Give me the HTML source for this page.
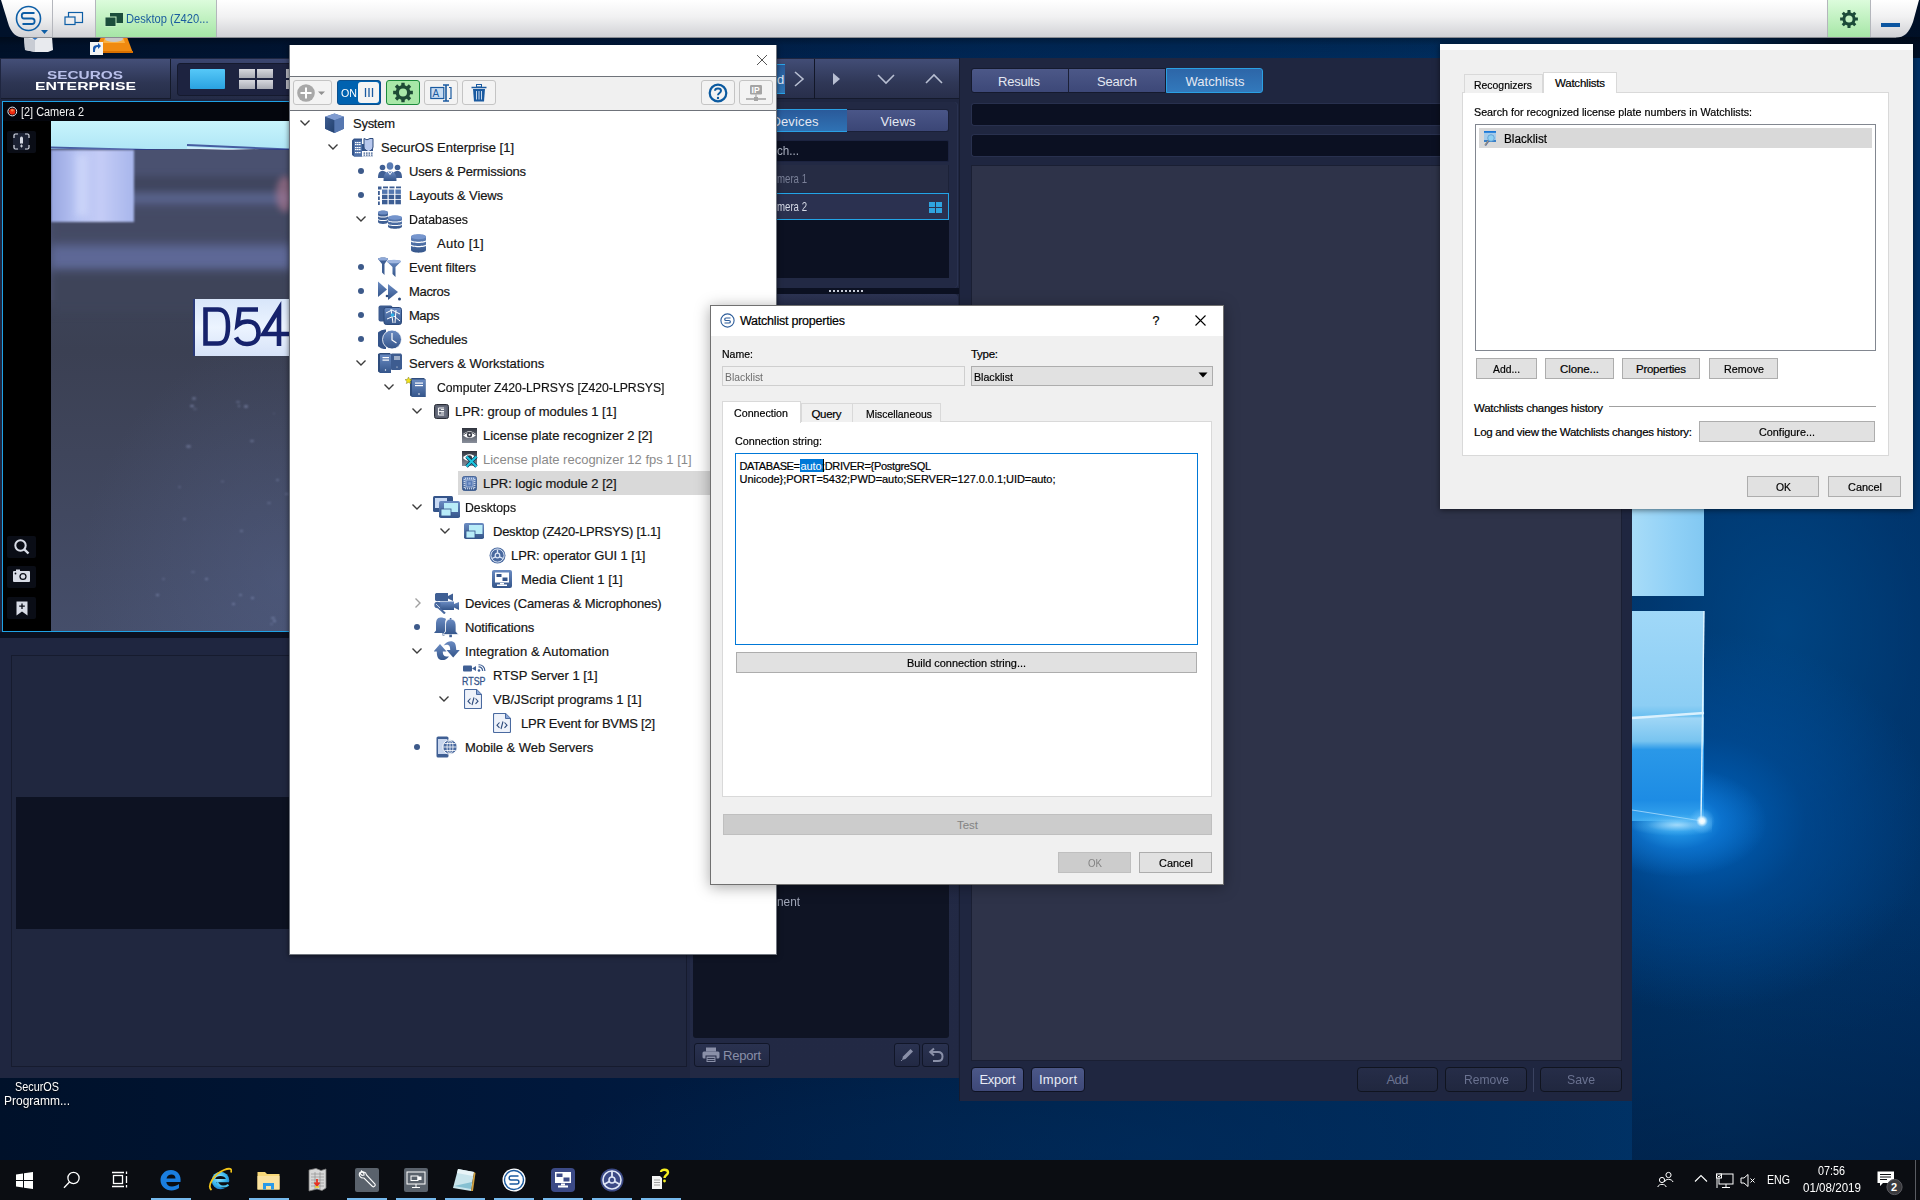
<!DOCTYPE html><html><head><meta charset="utf-8"><style>
*{margin:0;padding:0;box-sizing:border-box}
html,body{width:1920px;height:1200px;overflow:hidden;background:#002450;font-family:"Liberation Sans",sans-serif;position:relative}
.a{position:absolute}
.t{position:absolute;white-space:nowrap;line-height:1}
</style></head><body>
<div class="a" style="left:0px;top:0px;width:1920px;height:1200px;background:linear-gradient(90deg,#00112a 0%,#00183c 30%,#00234c 55%,#002c5c 75%,#00356a 90%,#003064 100%)"></div>
<div class="a" style="left:0px;top:0px;width:1920px;height:1200px;background:radial-gradient(ellipse 560px 60px at 1000px 45px,rgba(0,50,110,.35),rgba(0,40,90,0) 100%)"></div>
<div class="a" style="left:0px;top:1060px;width:1920px;height:100px;background:radial-gradient(ellipse 600px 110px at 1150px 90px,rgba(0,45,95,.55),rgba(0,40,90,0) 100%)"></div>
<div class="a" style="left:1632px;top:300px;width:288px;height:860px;background:radial-gradient(ellipse 300px 420px at 150px 330px,rgba(0,72,136,.8) 0%,rgba(0,60,120,.5) 45%,rgba(0,40,90,0) 100%)"></div>
<div class="a" style="left:1632px;top:900px;width:288px;height:260px;background:linear-gradient(rgba(0,20,50,0),rgba(0,20,50,.45))"></div>
<div class="a" style="left:1700px;top:0px;width:220px;height:58px;background:linear-gradient(90deg,rgba(0,12,30,0),rgba(0,10,28,.85) 60%)"></div>
<div class="a" style="left:0px;top:37px;width:1920px;height:21px;background:linear-gradient(rgba(0,0,0,.35),rgba(0,0,0,.08) 40%,rgba(0,0,0,0))"></div>
<div class="a" style="left:1632px;top:560px;width:288px;height:500px;background:radial-gradient(ellipse 230px 190px at 70px 262px,rgba(0,110,210,.8),rgba(0,85,170,.45) 45%,rgba(0,60,130,0) 100%)"></div>
<div class="a" style="left:1632px;top:760px;width:200px;height:140px;background:radial-gradient(ellipse 90px 55px at 45px 62px,rgba(50,175,250,.95),rgba(20,130,225,.55) 50%,rgba(0,90,170,0) 100%)"></div>
<div class="a" style="left:1632px;top:509px;width:72px;height:87px;background:linear-gradient(90deg,#a8dcf8,#8fd0f6 60%,#82c8f2)"></div>
<div class="a" style="left:1632px;top:611px;width:72px;height:210px;background:linear-gradient(180deg,#a0d8f8 0%,#8ccef4 45%,#6cc0f0 50%,#9fd6f6 51%,#78c4f0 62%,#2a98e8 66%,#1d8ce4 90%,#3aa8f0 100%)"></div>
<svg class="a" style="left:1632px;top:600px" width="90" height="240"><path d="M0,118 L72,113" stroke="#e6f6ff" stroke-width="2.5" opacity=".9"/><path d="M72,11 L69,221" stroke="#dff4ff" stroke-width="1.4"/><path d="M0,210 L70,221" stroke="#bfe6ff" stroke-width="1" opacity=".7"/></svg>
<div class="a" style="left:1632px;top:808px;width:80px;height:30px;background:radial-gradient(ellipse 50px 11px at 45px 17px,rgba(210,240,255,.7),rgba(120,210,255,.25) 60%,rgba(0,0,0,0) 100%)"></div>
<div class="a" style="left:1689px;top:808px;width:26px;height:26px;background:radial-gradient(circle,#fff 0,#e6f8ff 14%,rgba(120,200,255,.45) 32%,rgba(120,200,255,0) 70%)"></div>
<div class="t" style="left:15.00px;top:1079.53px;font-size:13.5px;color:#fff;transform:scaleX(0.8033);transform-origin:0 0;text-shadow:0 1px 2px #000;">SecurOS</div>
<div class="t" style="left:4.00px;top:1094.03px;font-size:13.5px;color:#fff;transform:scaleX(0.8887);transform-origin:0 0;text-shadow:0 1px 2px #000;">Programm...</div>
<svg class="a" style="left:15px;top:37px" width="130" height="20" viewBox="0 0 130 20"><path d="M9,0 H37 L38,13 L33,15 L20,15 L10,13 Z" fill="#e8eaee"/><path d="M9,0 L10,13 L20,15 L20,3 Z" fill="#c8ccd4"/><path d="M16,0 L20,3 L24,0 Z" fill="#2a70c0"/><path d="M86,0 H112 L118,16 H79 Z" fill="#f08a10"/><path d="M90,0 H108 L110,6 H88 Z" fill="#fbb040"/><ellipse cx="99" cy="2" rx="9" ry="3" fill="#c8c8c8"/><path d="M79,14 H118 L118,16 H79 Z" fill="#d87000"/><rect x="75" y="5" width="13" height="13" fill="#f4f4f4"/><path d="M78,15 L78,11 C78,9 80,8 83,8 L83,6 L86,9 L83,12 L83,10 C81,10 80,11 80,15 Z" fill="#1a5ab0"/></svg>
<svg class="a" style="left:0;top:0" width="1920" height="40" viewBox="0 0 1920 40">
<defs><linearGradient id="tbg" x1="0" y1="0" x2="0" y2="1"><stop offset="0" stop-color="#ffffff"/><stop offset="0.45" stop-color="#f1f1f2"/><stop offset="1" stop-color="#d0d1d5"/></linearGradient>
<linearGradient id="gtab" x1="0" y1="0" x2="0" y2="1"><stop offset="0" stop-color="#dcfcdc"/><stop offset="1" stop-color="#a6e6a6"/></linearGradient></defs>
<path d="M1,0 L1919,0 L1913,22 C1909,33 1904,37.5 1896,37.5 L24,37.5 C16,37.5 12,33 9,26 Z" fill="url(#tbg)"/>
<path d="M24,37.5 L1896,37.5" stroke="#8a8c92" stroke-width="1"/>
<rect x="52" y="0" width="1" height="37" fill="#b4b6bc"/>
<rect x="95" y="0" width="1" height="37" fill="#b4b6bc"/>
<rect x="96" y="0" width="120" height="37" fill="url(#gtab)"/>
<rect x="216" y="0" width="1" height="37" fill="#b4b6bc"/>
<rect x="1827" y="0" width="1" height="37" fill="#b4b6bc"/>
<rect x="1828" y="0" width="42" height="37" fill="url(#gtab)"/>
<rect x="1870" y="0" width="1" height="37" fill="#b4b6bc"/>
<circle cx="28.5" cy="18.5" r="12" fill="none" stroke="#0d5ea6" stroke-width="1.6"/>
<path d="M34.5,13 L24,13 C21,13 21,18.5 24,18.5 L32,18.5 C35.5,18.5 35.5,24 32,24 L22.5,24" fill="none" stroke="#0d5ea6" stroke-width="1.8"/>
<path d="M41,30 L48,30 L44.5,34 Z" fill="#0d5ea6"/>
<rect x="68.5" y="12.5" width="14" height="10" fill="none" stroke="#0d5ea6" stroke-width="1.2"/>
<rect x="65" y="17" width="10" height="7.5" fill="#eeeeef" stroke="#0d5ea6" stroke-width="1.2"/>
<rect x="110" y="13" width="13" height="10" fill="#1b4d3b"/>
<rect x="105" y="17" width="11" height="9.5" fill="#1b4d3b" stroke="#c4f0c4" stroke-width="1"/>
<rect x="1881" y="23" width="19" height="4" fill="#0b55a0"/>
</svg>
<div class="t" style="left:126px;top:13px;font-size:12px;color:#1a5c9e;transform:scaleX(0.93);transform-origin:0 0">Desktop (Z420...</div>
<svg class="a" style="left:0;top:0;overflow:visible" width="1" height="1"><path d="M1855.46,17.39 L1857.88,17.52 L1857.88,20.48 L1855.46,20.61 L1854.71,22.44 L1856.32,24.23 L1854.23,26.32 L1852.44,24.71 L1850.61,25.46 L1850.48,27.88 L1847.52,27.88 L1847.39,25.46 L1845.56,24.71 L1843.77,26.32 L1841.68,24.23 L1843.29,22.44 L1842.54,20.61 L1840.12,20.48 L1840.12,17.52 L1842.54,17.39 L1843.29,15.56 L1841.68,13.77 L1843.77,11.68 L1845.56,13.29 L1847.39,12.54 L1847.52,10.12 L1850.48,10.12 L1850.61,12.54 L1852.44,13.29 L1854.23,11.68 L1856.32,13.77 L1854.71,15.56Z" fill="#1b4a38"/><circle cx="1849" cy="19" r="3.60" fill="#c3f2c3"/></svg>
<div class="a" style="left:0px;top:58px;width:690px;height:1020px;background:#1f2640"></div>
<div class="a" style="left:1px;top:59px;width:169px;height:40px;background:linear-gradient(#444f78,#2d3553 60%,#262d48);box-shadow:inset 0 -1px 0 #161b2c"></div>
<div class="a" style="left:170px;top:59px;width:1px;height:40px;background:#141a2a"></div>
<div class="a" style="left:171px;top:59px;width:520px;height:40px;background:linear-gradient(#3b4670,#2a3250 60%,#242b46)"></div>
<div class="a" style="left:177px;top:63px;width:300px;height:33px;background:#1d2340;border:1px solid #151a2e;border-radius:3px"></div>
<div class="a" style="left:190px;top:69px;width:35px;height:20px;background:linear-gradient(#56c8f8,#2aa2e0);border-radius:1px"></div>
<div class="a" style="left:239px;top:69px;width:16px;height:9px;background:linear-gradient(#d6d8de,#a8abb4)"></div>
<div class="a" style="left:257px;top:69px;width:16px;height:9px;background:linear-gradient(#d6d8de,#a8abb4)"></div>
<div class="a" style="left:239px;top:80px;width:16px;height:9px;background:linear-gradient(#d6d8de,#a8abb4)"></div>
<div class="a" style="left:257px;top:80px;width:16px;height:9px;background:linear-gradient(#d6d8de,#a8abb4)"></div>
<div class="a" style="left:286px;top:69px;width:3px;height:9px;background:#b8bac2"></div>
<div class="a" style="left:286px;top:80px;width:3px;height:9px;background:#b8bac2"></div>
<div class="t" style="left:47.00px;top:69.72px;font-size:11.5px;color:#b9c0ea;font-weight:bold;transform:scaleX(1.3363);transform-origin:0 0;">SECUROS</div>
<div class="t" style="left:35.00px;top:80.72px;font-size:11.5px;color:#ffffff;font-weight:bold;transform:scaleX(1.3743);transform-origin:0 0;">ENTERPRISE</div>
<div class="a" style="left:2px;top:101px;width:688px;height:531px;background:#000;border:1px solid #1fa2e6"></div>
<div class="a" style="left:3px;top:102px;width:686px;height:19px;background:#04060d"></div>
<svg class="a" style="left:6px;top:105px" width="13" height="13"><circle cx="6.3" cy="6.5" r="4.4" fill="none" stroke="#e8e8ee" stroke-width="1"/><circle cx="6.3" cy="6.5" r="3.1" fill="#f02a10"/><circle cx="6.3" cy="5.3" r="1.3" fill="#ff9a50" opacity=".8"/></svg>
<div class="t" style="left:21.00px;top:105.80px;font-size:12px;color:#f2f2f2;transform:scaleX(0.9082);transform-origin:0 0;">[2] Camera 2</div>
<div class="a" style="left:7px;top:131px;width:29px;height:22px;background:#0a0d16;border-radius:2px"></div>
<div class="a" style="left:7px;top:536px;width:29px;height:22px;background:#0a0d16;border-radius:2px"></div>
<div class="a" style="left:7px;top:566px;width:29px;height:22px;background:#0a0d16;border-radius:2px"></div>
<div class="a" style="left:7px;top:597px;width:29px;height:22px;background:#0a0d16;border-radius:2px"></div>
<div class="a" style="left:13px;top:133px;width:16px;height:17px;background:#1c2234;border-radius:2px"></div>
<svg class="a" style="left:13px;top:133px" width="17" height="17" viewBox="0 0 17 17" fill="none" stroke="#d6dae4" stroke-width="1.2"><path d="M1,5 V2.5 Q1,1 2.5,1 H5 M12,1 H14.5 Q16,1 16,2.5 V5 M16,12 V14.5 Q16,16 14.5,16 H12 M5,16 H2.5 Q1,16 1,14.5 V12"/><path d="M7,4.5 Q8.5,2.5 10,4.5 V10.5 H7 Z" fill="#d6dae4" stroke="none"/><path d="M8.5,11.5 V14.5 M7,13 H10" stroke-width="0.9"/></svg>
<svg class="a" style="left:13px;top:538px" width="18" height="18" viewBox="0 0 18 18" fill="none" stroke="#d8dce6" stroke-width="2"><circle cx="7.5" cy="7.5" r="5.2"/><path d="M11.3,11.3 L15.5,15.5" stroke-width="2.4"/></svg>
<svg class="a" style="left:13px;top:569px" width="17" height="14" viewBox="0 0 17 14"><rect x="0" y="2" width="17" height="11" rx="1" fill="#d8dce6"/><rect x="3" y="0.5" width="4" height="2" fill="#d8dce6"/><circle cx="10" cy="7.5" r="3.6" fill="#0a0d16"/><circle cx="10" cy="7.5" r="2.3" fill="#d8dce6"/><circle cx="2.5" cy="4.5" r="0.9" fill="#0a0d16"/></svg>
<svg class="a" style="left:16px;top:601px" width="12" height="15" viewBox="0 0 12 15"><path d="M0.5,0.5 H11.5 V14.5 L6,10.5 L0.5,14.5 Z" fill="#d8dce6"/><path d="M6,2.5 V8 M3.2,5.2 H8.8" stroke="#0a0d16" stroke-width="1.3"/></svg>
<div class="a" style="left:0;top:0;width:289px;height:632px;overflow:hidden;clip-path:inset(121px 0 1px 51px)"><div class="a" style="left:51px;top:121px;width:240px;height:511px;background:linear-gradient(#4c5472 0%,#4a5170 30%,#3c4256 37%,#3b4053 45%,#3f455b 65%,#454e6a 100%)"></div><div class="a" style="left:51px;top:121px;width:240px;height:28px;background:linear-gradient(#c8f4fc,#b0e6f6)"></div><svg class="a" style="left:51px;top:140px" width="240" height="20"><path d="M0,7.5 L134,11" stroke="#2a3a8c" stroke-width="2.2" fill="none" opacity="0.8"/><path d="M136,5 L240,9.5" stroke="#2a3a8c" stroke-width="2" fill="none" opacity="0.8"/><path d="M136,7.8 L240,12" stroke="#e8f4ff" stroke-width="1.4" fill="none" opacity=".7"/></svg><div class="a" style="left:51px;top:150px;width:240px;height:150px;background:#4a5170"></div><div class="a" style="left:51px;top:176px;width:240px;height:14px;background:#40465f;filter:blur(3px)"></div><div class="a" style="left:51px;top:194px;width:240px;height:10px;background:#58628a;filter:blur(3px)"></div><div class="a" style="left:51px;top:208px;width:240px;height:32px;background:#444a64;filter:blur(4px)"></div><div class="a" style="left:51px;top:246px;width:240px;height:24px;background:#5e6896;filter:blur(4px)"></div><div class="a" style="left:51px;top:272px;width:240px;height:40px;background:#3e4459;filter:blur(5px)"></div><div class="a" style="left:51px;top:150px;width:83px;height:72px;background:linear-gradient(90deg,#98a6e0,#b6c2f2 30%,#c4ccf6 60%,#a8b6ec);filter:blur(1px)"></div><div class="a" style="left:76px;top:154px;width:12px;height:62px;background:#d4dcfc;opacity:.6;filter:blur(3px)"></div><div class="a" style="left:276px;top:176px;width:18px;height:36px;background:#b07890;border-radius:50%;filter:blur(3px);opacity:.6"></div><div class="a" style="left:51px;top:330px;width:240px;height:302px;background:radial-gradient(ellipse 200px 240px at 230px 250px,rgba(90,105,150,.35),rgba(60,70,100,0))"></div><div class="a" style="left:183.3px;top:517.9px;width:2.8px;height:1.9px;border-radius:50%;background:#a8b4e0;opacity:0.38;filter:blur(1.2px)"></div><div class="a" style="left:237.6px;top:405.4px;width:2.0px;height:1.3px;border-radius:50%;background:#a8b4e0;opacity:0.45;filter:blur(1.2px)"></div><div class="a" style="left:186.3px;top:445.1px;width:4.3px;height:2.9px;border-radius:50%;background:#a8b4e0;opacity:0.34;filter:blur(1.2px)"></div><div class="a" style="left:267.1px;top:501.9px;width:3.5px;height:2.3px;border-radius:50%;background:#a8b4e0;opacity:0.25;filter:blur(1.2px)"></div><div class="a" style="left:238.9px;top:594.0px;width:3.2px;height:2.1px;border-radius:50%;background:#a8b4e0;opacity:0.42;filter:blur(1.2px)"></div><div class="a" style="left:244.0px;top:405.0px;width:3.7px;height:2.5px;border-radius:50%;background:#a8b4e0;opacity:0.38;filter:blur(1.2px)"></div><div class="a" style="left:192.2px;top:397.3px;width:4.0px;height:2.7px;border-radius:50%;background:#a8b4e0;opacity:0.34;filter:blur(1.2px)"></div><div class="a" style="left:250.6px;top:596.5px;width:3.6px;height:2.4px;border-radius:50%;background:#a8b4e0;opacity:0.48;filter:blur(1.2px)"></div><div class="a" style="left:205.3px;top:578.2px;width:3.0px;height:2.0px;border-radius:50%;background:#a8b4e0;opacity:0.48;filter:blur(1.2px)"></div><div class="a" style="left:273.0px;top:412.9px;width:2.2px;height:1.5px;border-radius:50%;background:#a8b4e0;opacity:0.27;filter:blur(1.2px)"></div><div class="a" style="left:285.2px;top:492.5px;width:3.4px;height:2.3px;border-radius:50%;background:#a8b4e0;opacity:0.29;filter:blur(1.2px)"></div><div class="a" style="left:221.0px;top:480.7px;width:2.8px;height:1.8px;border-radius:50%;background:#a8b4e0;opacity:0.38;filter:blur(1.2px)"></div><div class="a" style="left:231.8px;top:602.5px;width:3.6px;height:2.4px;border-radius:50%;background:#a8b4e0;opacity:0.48;filter:blur(1.2px)"></div><div class="a" style="left:269.9px;top:622.9px;width:3.5px;height:2.4px;border-radius:50%;background:#a8b4e0;opacity:0.25;filter:blur(1.2px)"></div><div class="a" style="left:270.5px;top:616.7px;width:4.1px;height:2.7px;border-radius:50%;background:#a8b4e0;opacity:0.37;filter:blur(1.2px)"></div><div class="a" style="left:249.9px;top:439.6px;width:3.9px;height:2.6px;border-radius:50%;background:#a8b4e0;opacity:0.37;filter:blur(1.2px)"></div><div class="a" style="left:189.9px;top:404.9px;width:4.0px;height:2.6px;border-radius:50%;background:#a8b4e0;opacity:0.50;filter:blur(1.2px)"></div><div class="a" style="left:162.4px;top:578.1px;width:2.9px;height:1.9px;border-radius:50%;background:#a8b4e0;opacity:0.25;filter:blur(1.2px)"></div><div class="a" style="left:191.1px;top:570.7px;width:4.0px;height:2.7px;border-radius:50%;background:#a8b4e0;opacity:0.21;filter:blur(1.2px)"></div><div class="a" style="left:236.0px;top:400.6px;width:3.6px;height:2.4px;border-radius:50%;background:#a8b4e0;opacity:0.30;filter:blur(1.2px)"></div><div class="a" style="left:273.3px;top:620.4px;width:3.1px;height:2.1px;border-radius:50%;background:#a8b4e0;opacity:0.50;filter:blur(1.2px)"></div><div class="a" style="left:193.4px;top:408.1px;width:3.4px;height:2.2px;border-radius:50%;background:#a8b4e0;opacity:0.21;filter:blur(1.2px)"></div><div class="a" style="left:177.6px;top:485.9px;width:3.4px;height:2.3px;border-radius:50%;background:#a8b4e0;opacity:0.25;filter:blur(1.2px)"></div><div class="a" style="left:155.9px;top:593.9px;width:2.7px;height:1.8px;border-radius:50%;background:#a8b4e0;opacity:0.49;filter:blur(1.2px)"></div><div class="a" style="left:275.5px;top:478.8px;width:3.0px;height:2.0px;border-radius:50%;background:#a8b4e0;opacity:0.36;filter:blur(1.2px)"></div><div class="a" style="left:240.1px;top:530.0px;width:3.3px;height:2.2px;border-radius:50%;background:#a8b4e0;opacity:0.39;filter:blur(1.2px)"></div><div class="a" style="left:193px;top:299px;width:100px;height:57px;background:linear-gradient(#d8e6fa,#ecf4ff 50%,#d6e2f8);border-left:2px solid #2a3a78;filter:blur(0.5px)"></div><svg class="a" style="left:0;top:0;filter:blur(0.45px)" width="300" height="400" viewBox="0 0 300 400" fill="none" stroke="#16226c" stroke-width="4.6"><path d="M205.5,309.5 H218 C226,309.5 228,316 228,326.5 C228,337 226,343.5 218,343.5 H205.5 Z"/><path d="M258,309.5 H239.5 L237.5,325 C240.5,322.5 244,321.5 247.5,321.5 C255,321.5 258.5,326.5 258.5,333 C258.5,340 254,344 247,344 C241.5,344 238,341.5 236,337.5"/><path d="M279,346 V309 L263.5,334 H290"/></svg></div>
<div class="a" style="left:0px;top:632px;width:690px;height:6px;background:#0b1020"></div>
<div class="a" style="left:11px;top:655px;width:676px;height:412px;background:#20273f;border:1px solid #161b2e"></div>
<div class="a" style="left:16px;top:797px;width:671px;height:132px;background:#0d1222"></div>
<div class="a" style="left:690px;top:58px;width:270px;height:1020px;background:#1f2640"></div>
<div class="a" style="left:690px;top:59px;width:269px;height:40px;background:linear-gradient(#424d76,#2f3756 60%,#272e4a);box-shadow:inset 0 -1px 0 #151a2c"></div>
<div class="a" style="left:814px;top:59px;width:1px;height:40px;background:#121728"></div>
<div class="a" style="left:700px;top:64px;width:85px;height:30px;background:linear-gradient(#2a5a98,#2e74b4);border-top:1px solid #2aa4e8;border-bottom:1px solid #2aa4e8"></div>
<div class="t" style="left:777.00px;top:72.95px;font-size:13px;color:#dfe6f2;">d</div>
<svg class="a" style="left:790px;top:66px" width="160" height="26" viewBox="0 0 160 26" fill="none" stroke="#b8bfd2" stroke-width="1.6"><path d="M5,6 L13,13 L5,20"/><path d="M43,7 L43,19 L50,13 Z" fill="#b8bfd2" stroke="none"/><path d="M88,9 L96,17 L104,9"/><path d="M136,17 L144,9 L152,17"/></svg>
<div class="a" style="left:690px;top:102px;width:268px;height:186px;background:#222944;border-radius:0 4px 4px 0;box-shadow:inset -1px 0 0 #2a3250"></div>
<div class="a" style="left:700px;top:109px;width:147px;height:23px;background:linear-gradient(#2a5a9a,#2f72b4);border-top:1px solid #2aa0e4;border-bottom:1px solid #2aa0e4"></div>
<div class="a" style="left:847px;top:109px;width:102px;height:23px;background:linear-gradient(#4a5688,#3b4676);border-radius:0 3px 3px 0;border:1px solid #1a2038;border-left:none"></div>
<div class="t" style="left:771.50px;top:114.95px;font-size:13px;color:#e4e8f2;letter-spacing:0.127px;">Devices</div>
<div class="t" style="left:880.50px;top:114.95px;font-size:13px;color:#e4e8f2;letter-spacing:0.139px;">Views</div>
<div class="a" style="left:700px;top:140px;width:249px;height:22px;background:#0b1022;border-radius:2px;border:1px solid #1c2340"></div>
<div class="t" style="left:777.00px;top:143.95px;font-size:13px;color:#aab0c0;transform:scaleX(0.8956);transform-origin:0 0;">ch...</div>
<div class="a" style="left:700px;top:165px;width:249px;height:27px;background:#262c44;border-right:1px solid #1c2238"></div>
<div class="t" style="left:777.00px;top:171.95px;font-size:13px;color:#7a8098;transform:scaleX(0.7414);transform-origin:0 0;">mera 1</div>
<div class="a" style="left:700px;top:193px;width:249px;height:27px;background:#2b3150;border:1px solid #22a4e6"></div>
<div class="t" style="left:777.00px;top:199.95px;font-size:13px;color:#d6dae6;transform:scaleX(0.7414);transform-origin:0 0;">mera 2</div>
<div class="a" style="left:929px;top:202px;width:6px;height:5px;background:#2fa4e0"></div>
<div class="a" style="left:936px;top:202px;width:6px;height:5px;background:#2fa4e0"></div>
<div class="a" style="left:929px;top:208px;width:6px;height:5px;background:#2fa4e0"></div>
<div class="a" style="left:936px;top:208px;width:6px;height:5px;background:#2fa4e0"></div>
<div class="a" style="left:700px;top:220px;width:249px;height:58px;background:#0c1122"></div>
<div class="a" style="left:690px;top:288px;width:270px;height:6px;background:#0c1122"></div>
<div class="a" style="left:829px;top:290px;width:2px;height:2px;background:#c8ccd8"></div>
<div class="a" style="left:833px;top:290px;width:2px;height:2px;background:#c8ccd8"></div>
<div class="a" style="left:837px;top:290px;width:2px;height:2px;background:#c8ccd8"></div>
<div class="a" style="left:841px;top:290px;width:2px;height:2px;background:#c8ccd8"></div>
<div class="a" style="left:845px;top:290px;width:2px;height:2px;background:#c8ccd8"></div>
<div class="a" style="left:849px;top:290px;width:2px;height:2px;background:#c8ccd8"></div>
<div class="a" style="left:853px;top:290px;width:2px;height:2px;background:#c8ccd8"></div>
<div class="a" style="left:857px;top:290px;width:2px;height:2px;background:#c8ccd8"></div>
<div class="a" style="left:861px;top:290px;width:2px;height:2px;background:#c8ccd8"></div>
<div class="a" style="left:690px;top:294px;width:268px;height:784px;background:linear-gradient(#2c3352,#232a46 20px,#222944);border-radius:0 4px 0 0"></div>
<div class="a" style="left:693px;top:312px;width:256px;height:726px;background:#0f1424;border-radius:3px"></div>
<div class="t" style="left:777.00px;top:894.95px;font-size:13px;color:#a0a6b8;transform:scaleX(0.9090);transform-origin:0 0;">nent</div>
<div class="a" style="left:694px;top:1043px;width:76px;height:24px;background:linear-gradient(#2a3250,#222944);border:1px solid #111628;border-radius:3px"></div>
<svg class="a" style="left:702px;top:1047px" width="18" height="16" viewBox="0 0 18 16"><rect x="4" y="0.5" width="10" height="4" fill="#8a90a8"/><rect x="0.5" y="4.5" width="17" height="7" rx="1.5" fill="#8a90a8"/><rect x="4" y="9" width="10" height="6.5" fill="#8a90a8" stroke="#222944" stroke-width="1"/><path d="M5.5,11.5 H12.5 M5.5,13.5 H12.5" stroke="#222944" stroke-width="0.9"/></svg>
<div class="t" style="left:723.00px;top:1048.95px;font-size:13px;color:#8a90a8;letter-spacing:-0.204px;">Report</div>
<div class="a" style="left:894px;top:1043px;width:26px;height:24px;background:linear-gradient(#2a3250,#222944);border:1px solid #111628;border-radius:3px"></div>
<div class="a" style="left:922px;top:1043px;width:27px;height:24px;background:linear-gradient(#2a3250,#222944);border:1px solid #111628;border-radius:3px"></div>
<svg class="a" style="left:899px;top:1047px" width="16" height="16" viewBox="0 0 16 16"><path d="M3,13 L4,9.5 L11.5,2 L14,4.5 L6.5,12 Z" fill="#8a90a8"/><path d="M3,13 L2.2,14 " stroke="#8a90a8"/></svg>
<svg class="a" style="left:927px;top:1046px" width="18" height="18" viewBox="0 0 18 18" fill="none" stroke="#8a90a8" stroke-width="2"><path d="M4,6 H11 C14.5,6 15.5,8.5 15.5,10.5 C15.5,12.5 14.5,15 11,15 H6"/><path d="M7,2.5 L3.2,6 L7,9.5" /></svg>
<div class="a" style="left:959px;top:58px;width:673px;height:1043px;background:#1f2640;box-shadow:inset 1px 0 0 #171c30"></div>
<div class="a" style="left:971px;top:68px;width:98px;height:25px;background:linear-gradient(#4c5888,#3d4878);border:1px solid #151a2e;border-radius:3px 0 0 3px"></div>
<div class="a" style="left:1068px;top:68px;width:98px;height:25px;background:linear-gradient(#4c5888,#3d4878);border:1px solid #151a2e;border-left:1px solid #1b2036"></div>
<div class="a" style="left:1166px;top:68px;width:97px;height:25px;background:linear-gradient(#2d66a8,#3279bc);border:1px solid #2aa0e4;border-radius:0 3px 3px 0"></div>
<div class="t" style="left:998.00px;top:74.95px;font-size:13px;color:#e4e8f2;letter-spacing:-0.225px;">Results</div>
<div class="t" style="left:1097.00px;top:74.95px;font-size:13px;color:#e4e8f2;letter-spacing:-0.238px;">Search</div>
<div class="t" style="left:1185.50px;top:74.95px;font-size:13px;color:#e4e8f2;letter-spacing:0.028px;">Watchlists</div>
<div class="a" style="left:971px;top:103px;width:661px;height:23px;background:#0b1022;border:1px solid #28304e;border-right:none;border-radius:3px 0 0 3px"></div>
<div class="a" style="left:971px;top:134px;width:661px;height:23px;background:#0b1022;border:1px solid #28304e;border-right:none;border-radius:3px 0 0 3px"></div>
<div class="a" style="left:971px;top:165px;width:651px;height:896px;background:#2e3349;border:1px solid #1a1f33"></div>
<div class="a" style="left:971px;top:1067px;width:53px;height:25px;background:linear-gradient(#4c5888,#3e4878);border:1px solid #0e1222;border-radius:4px"></div><div class="t" style="left:979.50px;top:1072.95px;font-size:13px;color:#e8ecf6;letter-spacing:-0.315px;">Export</div>
<div class="a" style="left:1031px;top:1067px;width:54px;height:25px;background:linear-gradient(#4c5888,#3e4878);border:1px solid #0e1222;border-radius:4px"></div><div class="t" style="left:1039.00px;top:1072.95px;font-size:13px;color:#e8ecf6;letter-spacing:0.231px;">Import</div>
<div class="a" style="left:1357px;top:1067px;width:81px;height:25px;background:linear-gradient(#262d48,#20273f);border:1px solid #10141f;border-radius:4px"></div><div class="t" style="left:1386.50px;top:1072.95px;font-size:13px;color:#6a7290;letter-spacing:-0.566px;">Add</div>
<div class="a" style="left:1445px;top:1067px;width:82px;height:25px;background:linear-gradient(#262d48,#20273f);border:1px solid #10141f;border-radius:4px"></div><div class="t" style="left:1463.50px;top:1072.95px;font-size:13px;color:#6a7290;transform:scaleX(0.9296);transform-origin:0 0;">Remove</div>
<div class="a" style="left:1533px;top:1068px;width:1px;height:24px;background:#3a4260"></div>
<div class="a" style="left:1540px;top:1067px;width:82px;height:25px;background:linear-gradient(#262d48,#20273f);border:1px solid #10141f;border-radius:4px"></div><div class="t" style="left:1567.00px;top:1072.95px;font-size:13px;color:#6a7290;transform:scaleX(0.9449);transform-origin:0 0;">Save</div>
<svg width="0" height="0" style="position:absolute"><defs><linearGradient id="gb" x1="0" y1="0" x2="0" y2="1"><stop offset="0" stop-color="#6a8bc2"/><stop offset="1" stop-color="#34558a"/></linearGradient><linearGradient id="gcl" x1="0" y1="0" x2="1" y2="1"><stop offset="0" stop-color="#3d5c90"/><stop offset="1" stop-color="#22406e"/></linearGradient><linearGradient id="geye" x1="0" y1="0" x2="0" y2="1"><stop offset="0" stop-color="#2e323c"/><stop offset="1" stop-color="#8a909c"/></linearGradient></defs></svg>
<div class="a" style="left:289px;top:45px;width:488px;height:910px;background:#fff;border:1px solid #70757e;border-top:none;box-shadow:0 1px 5px rgba(0,0,0,.55)"></div>
<svg class="a" style="left:756px;top:54px" width="12" height="12" viewBox="0 0 12 12"><path d="M1,1 L11,11 M11,1 L1,11" stroke="#555" stroke-width="1"/></svg>
<div class="a" style="left:290px;top:76px;width:486px;height:35px;background:#f0f0f0;border-top:1px solid #6f737a;border-bottom:1px solid #6f737a"></div>
<div class="a" style="left:293px;top:80px;width:39px;height:25px;background:#f3f3f3;border:1px solid #c4c4c4;border-radius:3px"></div>
<svg class="a" style="left:297px;top:84px" width="32" height="18"><circle cx="9" cy="9" r="8.8" fill="#a8a8a8"/><path d="M9,3.5 V14.5 M3.5,9 H14.5" stroke="#fff" stroke-width="2"/><path d="M21,7.5 H28 L24.5,11 Z" fill="#909090"/></svg>
<div class="a" style="left:337px;top:80px;width:44px;height:25px;background:#0062b0;border:1px solid #0b4f8c;border-radius:3px"></div>
<div class="a" style="left:358px;top:82px;width:21px;height:21px;background:#f4f4f4;border-radius:3px"></div>
<div class="t" style="left:341.00px;top:87.72px;font-size:11.5px;color:#fff;transform:scaleX(0.9275);transform-origin:0 0;">ON</div>
<svg class="a" style="left:363px;top:87px" width="12" height="11"><path d="M2.5,1 V10 M6,1 V10 M9.5,1 V10" stroke="#1a5aa0" stroke-width="1.3"/></svg>
<div class="a" style="left:386px;top:80px;width:34px;height:25px;background:#a8e8a8;border:1px solid #1c8a3c;border-radius:3px"></div>
<svg class="a" style="left:0;top:0;overflow:visible" width="1" height="1"><path d="M410.18,90.72 L412.86,90.86 L412.86,94.14 L410.18,94.28 L409.34,96.32 L411.14,98.31 L408.81,100.64 L406.82,98.84 L404.78,99.68 L404.64,102.36 L401.36,102.36 L401.22,99.68 L399.18,98.84 L397.19,100.64 L394.86,98.31 L396.66,96.32 L395.82,94.28 L393.14,94.14 L393.14,90.86 L395.82,90.72 L396.66,88.68 L394.86,86.69 L397.19,84.36 L399.18,86.16 L401.22,85.32 L401.36,82.64 L404.64,82.64 L404.78,85.32 L406.82,86.16 L408.81,84.36 L411.14,86.69 L409.34,88.68Z" fill="#1d4a35"/><circle cx="403" cy="92.5" r="4.00" fill="#a8e8a8"/></svg>
<div class="a" style="left:424px;top:80px;width:34px;height:25px;background:#f3f3f3;border:1px solid #c4c4c4;border-radius:3px"></div>
<svg class="a" style="left:430px;top:84px" width="22" height="18"><rect x="0.8" y="3.5" width="13" height="11" fill="#c8dcf2" stroke="#1a5aa0" stroke-width="1.2"/><text x="2.5" y="13" font-family="Liberation Sans" font-size="10" fill="#1a5aa0">A</text><path d="M13,1 H19 M16,1 V17 M13,17 H19" stroke="#1a5aa0" stroke-width="1.6"/><path d="M19,3.5 H21 V14.5 H19" stroke="#1a5aa0" stroke-width="1.2" fill="none"/></svg>
<div class="a" style="left:462px;top:80px;width:34px;height:25px;background:#f3f3f3;border:1px solid #c4c4c4;border-radius:3px"></div>
<svg class="a" style="left:471px;top:84px" width="16" height="18"><path d="M0.5,3.5 H15.5" stroke="#1a5aa0" stroke-width="1.5"/><rect x="5.5" y="0.5" width="5" height="2.5" fill="none" stroke="#1a5aa0" stroke-width="1"/><path d="M2,5 H14 L13,17.5 H3 Z" fill="#1a5aa0"/><path d="M5.5,7 V15.5 M8,7 V15.5 M10.5,7 V15.5" stroke="#dce8f6" stroke-width="0.9"/></svg>
<div class="a" style="left:701px;top:80px;width:34px;height:25px;background:#f3f3f3;border:1px solid #c4c4c4;border-radius:3px"></div>
<svg class="a" style="left:708px;top:83px" width="20" height="20"><circle cx="10" cy="10" r="8.3" fill="none" stroke="#0b5aa0" stroke-width="2.2"/><path d="M7,7.8 C7,4.6 13,4.6 13,7.8 C13,10 10,10 10,12.3" fill="none" stroke="#0b5aa0" stroke-width="2"/><circle cx="10" cy="15" r="1.2" fill="#0b5aa0"/></svg>
<div class="a" style="left:739px;top:80px;width:34px;height:25px;background:#f3f3f3;border:1px solid #c4c4c4;border-radius:3px"></div>
<svg class="a" style="left:745px;top:84px" width="22" height="18" viewBox="0 0 22 18"><rect x="5" y="1" width="12" height="9.5" rx="1.2" fill="#a4a4a4"/><text x="6.6" y="9" font-family="Liberation Sans" font-weight="bold" font-size="8.5" fill="#fff">IP</text><path d="M11,10.5 V13" stroke="#a4a4a4" stroke-width="1.2"/><path d="M1,15 H21" stroke="#a4a4a4" stroke-width="1.6"/><rect x="9" y="13" width="4" height="4" fill="#a4a4a4"/></svg>
<div class="a" style="left:458px;top:471px;width:318px;height:24px;background:#d9d9d9"></div>
<svg class="a" style="left:298.5px;top:119px" width="12" height="8"><path d="M1.5,1.5 L6,6 L10.5,1.5" fill="none" stroke="#3c3c3c" stroke-width="1.4"/></svg>
<svg class="a" style="left:325.0px;top:113.0px" width="19" height="20" viewBox="0 0 19 20"><path d="M9.5,0.5 L19,3.8 L19,15.8 L9.5,20 L0,15.8 L0,3.8 Z" fill="#4a6aa0"/><path d="M9.5,0.5 L19,3.8 L9.5,7.2 L0,3.8 Z" fill="#7f9bd0"/><path d="M0,3.8 L9.5,7.2 L9.5,20 L0,15.8 Z" fill="url(#gcl)"/><path d="M9.5,7.2 L19,3.8 L19,15.8 L9.5,20 Z" fill="#5677b0"/></svg>
<div class="t" style="left:353.00px;top:117.45px;font-size:13px;color:#151515;letter-spacing:-0.269px;-webkit-text-stroke:0.2px #151515;">System</div>
<svg class="a" style="left:326.5px;top:143px" width="12" height="8"><path d="M1.5,1.5 L6,6 L10.5,1.5" fill="none" stroke="#3c3c3c" stroke-width="1.4"/></svg>
<svg class="a" style="left:352.0px;top:137.5px" width="22" height="19" viewBox="0 0 22 19"><path d="M0,2.5 L2,0.5 L10,0.5 L10,6 L21,6 L21,18.5 L2,18.5 L0,17 Z" fill="#34548a"/><path d="M2,2.5 H10 V18.5 H2 Z" fill="#4e70a8"/><path d="M12,0.5 L15,1.8 L18,0.5 L21,0.5 V9 C21,11.5 18,13 16.5,13.5 C15,13 12,11.5 12,9 Z" fill="#b8c8ee" stroke="#2d4a7b" stroke-width="1"/><rect x="3" y="4" width="1.6" height="1.2" fill="#fff"/><rect x="3" y="6" width="1.6" height="1.2" fill="#fff"/><rect x="3" y="9" width="1.6" height="1.2" fill="#fff"/><rect x="3" y="11" width="1.6" height="1.2" fill="#fff"/><rect x="3" y="14" width="1.6" height="1.2" fill="#fff"/><rect x="5" y="4" width="1.6" height="1.2" fill="#fff"/><rect x="5" y="6" width="1.6" height="1.2" fill="#fff"/><rect x="5" y="9" width="1.6" height="1.2" fill="#fff"/><rect x="5" y="11" width="1.6" height="1.2" fill="#fff"/><rect x="5" y="14" width="1.6" height="1.2" fill="#fff"/><rect x="7" y="4" width="1.6" height="1.2" fill="#fff"/><rect x="7" y="6" width="1.6" height="1.2" fill="#fff"/><rect x="7" y="9" width="1.6" height="1.2" fill="#fff"/><rect x="7" y="11" width="1.6" height="1.2" fill="#fff"/><rect x="7" y="14" width="1.6" height="1.2" fill="#fff"/><rect x="10" y="13" width="11" height="5.5" fill="#fff"/><rect x="11.5" y="14.5" width="1.6" height="1.2" fill="#34548a"/><rect x="11.5" y="16.5" width="1.6" height="1.2" fill="#34548a"/><rect x="14.0" y="14.5" width="1.6" height="1.2" fill="#34548a"/><rect x="14.0" y="16.5" width="1.6" height="1.2" fill="#34548a"/><rect x="16.5" y="14.5" width="1.6" height="1.2" fill="#34548a"/><rect x="16.5" y="16.5" width="1.6" height="1.2" fill="#34548a"/><rect x="19.0" y="14.5" width="1.6" height="1.2" fill="#34548a"/><rect x="19.0" y="16.5" width="1.6" height="1.2" fill="#34548a"/></svg>
<div class="t" style="left:381.00px;top:141.45px;font-size:13px;color:#151515;letter-spacing:-0.032px;-webkit-text-stroke:0.2px #151515;">SecurOS Enterprise [1]</div>
<svg class="a" style="left:357.0px;top:167px" width="8" height="8"><circle cx="4" cy="4" r="3" fill="#3d5a8a"/></svg>
<svg class="a" style="left:378.0px;top:161.5px" width="24" height="19" viewBox="0 0 24 19"><circle cx="4.5" cy="5.5" r="2.8" fill="#3f5f94"/><circle cx="19.5" cy="5.5" r="2.8" fill="#3f5f94"/><path d="M0,16 C0,10 2,9 4.5,9 C7,9 9,10 9,14 V16 Z" fill="#3f5f94"/><path d="M15,14 C15,10 17,9 19.5,9 C22,9 24,10 24,16 H15Z" fill="#3f5f94"/><ellipse cx="12" cy="4" rx="3.3" ry="3.8" fill="#5a7cb4"/><path d="M5.5,19 C5.5,11 8,9.5 12,9.5 C16,9.5 18.5,11 18.5,19 Z" fill="url(#gb)"/><path d="M10,9.6 L12,12.5 L14,9.6" fill="none" stroke="#fff" stroke-width="1"/></svg>
<div class="t" style="left:409.00px;top:165.45px;font-size:13px;color:#151515;letter-spacing:-0.202px;-webkit-text-stroke:0.2px #151515;">Users &amp; Permissions</div>
<svg class="a" style="left:357.0px;top:191px" width="8" height="8"><circle cx="4" cy="4" r="3" fill="#3d5a8a"/></svg>
<svg class="a" style="left:378.0px;top:185.5px" width="24" height="19" viewBox="0 0 24 19"><rect x="0.0" y="0.5" width="3.5" height="3.0" fill="#3d5d92"/><rect x="5.0" y="0.5" width="5.0" height="1.8" fill="#3d5d92"/><rect x="11.5" y="0.5" width="5.0" height="1.8" fill="#3d5d92"/><rect x="18.0" y="0.5" width="5.0" height="1.8" fill="#3d5d92"/><rect x="0.0" y="5.0" width="1.8" height="4.0" fill="#3d5d92"/><rect x="0.0" y="10.5" width="1.8" height="3.5" fill="#3d5d92"/><rect x="0.0" y="15.5" width="1.8" height="3.5" fill="#3d5d92"/><rect x="4.0" y="3.5" width="5.5" height="4.4" fill="#5578b0"/><rect x="4.0" y="8.7" width="5.5" height="4.4" fill="#3d5e94"/><rect x="4.0" y="13.9" width="5.5" height="4.4" fill="#3d5e94"/><rect x="10.7" y="3.5" width="5.5" height="4.4" fill="#5578b0"/><rect x="10.7" y="8.7" width="5.5" height="4.4" fill="#3d5e94"/><rect x="10.7" y="13.9" width="5.5" height="4.4" fill="#3d5e94"/><rect x="17.4" y="3.5" width="5.5" height="4.4" fill="#5578b0"/><rect x="17.4" y="8.7" width="5.5" height="4.4" fill="#3d5e94"/><rect x="17.4" y="13.9" width="5.5" height="4.4" fill="#3d5e94"/></svg>
<div class="t" style="left:409.00px;top:189.45px;font-size:13px;color:#151515;letter-spacing:-0.134px;-webkit-text-stroke:0.2px #151515;">Layouts &amp; Views</div>
<svg class="a" style="left:354.5px;top:215px" width="12" height="8"><path d="M1.5,1.5 L6,6 L10.5,1.5" fill="none" stroke="#3c3c3c" stroke-width="1.4"/></svg>
<svg class="a" style="left:378.0px;top:209.5px" width="24" height="19" viewBox="0 0 24 19"><g fill="#3f5f94"><path d="M0,2.5 C0,0 10,0 10,2.5 V12 C10,14.5 0,14.5 0,12 Z"/></g><g fill="#fff"><path d="M0,5 C0,7 10,7 10,5 V6 C10,8 0,8 0,6Z"/><path d="M0,8.5 C0,10.5 10,10.5 10,8.5 V9.5 C10,11.5 0,11.5 0,9.5Z"/></g><ellipse cx="5" cy="2.5" rx="5" ry="2" fill="#6d8dc4"/><g fill="url(#gb)"><path d="M10,7.5 C10,5 24,5 24,7.5 V16.5 C24,19.5 10,19.5 10,16.5 Z"/></g><g fill="#fff"><path d="M10,10 C10,12 24,12 24,10 V11 C24,13 10,13 10,11Z"/><path d="M10,13.5 C10,15.5 24,15.5 24,13.5 V14.5 C24,16.5 10,16.5 10,14.5Z"/></g><ellipse cx="17" cy="7.5" rx="7" ry="2.2" fill="#7494cc"/></svg>
<div class="t" style="left:409.00px;top:213.45px;font-size:13px;color:#151515;transform:scaleX(0.9493);transform-origin:0 0;-webkit-text-stroke:0.2px #151515;">Databases</div>
<svg class="a" style="left:411.0px;top:233.5px" width="15" height="19" viewBox="0 0 15 19"><path d="M0,2.8 C0,-0.5 15,-0.5 15,2.8 V16 C15,19.5 0,19.5 0,16 Z" fill="url(#gb)"/><path d="M0,6 C0,8.3 15,8.3 15,6 V7.2 C15,9.5 0,9.5 0,7.2Z" fill="#fff"/><path d="M0,10.3 C0,12.6 15,12.6 15,10.3 V11.5 C15,13.8 0,13.8 0,11.5Z" fill="#fff"/><ellipse cx="7.5" cy="2.8" rx="7.5" ry="2.4" fill="#7696ce"/></svg>
<div class="t" style="left:437.00px;top:237.45px;font-size:13px;color:#151515;letter-spacing:0.256px;-webkit-text-stroke:0.2px #151515;">Auto [1]</div>
<svg class="a" style="left:357.0px;top:263px" width="8" height="8"><circle cx="4" cy="4" r="3" fill="#3d5a8a"/></svg>
<svg class="a" style="left:378.0px;top:257.0px" width="24" height="20" viewBox="0 0 24 20"><path d="M0,2 C0,0 10,0 10,2 L6.5,7 V18 L4,15.5 V7 Z" fill="#3f5f94"/><ellipse cx="5" cy="2" rx="5" ry="1.6" fill="#8fa9d8"/><path d="M9,4.5 C9,2.5 23,2.5 23,4.5 L17.5,10 V20 L14.5,17 V10 Z" fill="url(#gb)"/><ellipse cx="16" cy="4.5" rx="7" ry="1.8" fill="#9fb6e0"/></svg>
<div class="t" style="left:409.00px;top:261.45px;font-size:13px;color:#151515;letter-spacing:-0.076px;-webkit-text-stroke:0.2px #151515;">Event filters</div>
<svg class="a" style="left:357.0px;top:287px" width="8" height="8"><circle cx="4" cy="4" r="3" fill="#3d5a8a"/></svg>
<svg class="a" style="left:378.0px;top:281.0px" width="24" height="20" viewBox="0 0 24 20"><path d="M0,0.5 L9,8.5 L0,16 Z" fill="url(#gb)"/><path d="M10,3 L20,11 L10,19 Z" fill="url(#gb)"/><circle cx="9" cy="15" r="1.3" fill="#2d4a7b"/><circle cx="21.5" cy="18" r="1.5" fill="#2d4a7b"/></svg>
<div class="t" style="left:409.00px;top:285.45px;font-size:13px;color:#151515;letter-spacing:-0.324px;-webkit-text-stroke:0.2px #151515;">Macros</div>
<svg class="a" style="left:357.0px;top:311px" width="8" height="8"><circle cx="4" cy="4" r="3" fill="#3d5a8a"/></svg>
<svg class="a" style="left:378.0px;top:305.0px" width="24" height="20" viewBox="0 0 24 20"><rect x="0.5" y="0.5" width="14" height="16" rx="2" fill="#3d5c90"/><rect x="6" y="2.5" width="17.5" height="17" rx="2.2" fill="url(#gb)" stroke="#2d4a7b"/><path d="M8,8 L14,5 L22,9 M9,14 L16,11 L22,16 M13,4 L15,18 M18,5 L17,18" stroke="#fff" stroke-width="1" fill="none"/><circle cx="14.5" cy="10" r="1.8" fill="#2ab0e8"/></svg>
<div class="t" style="left:409.00px;top:309.45px;font-size:13px;color:#151515;letter-spacing:-0.463px;-webkit-text-stroke:0.2px #151515;">Maps</div>
<svg class="a" style="left:357.0px;top:335px" width="8" height="8"><circle cx="4" cy="4" r="3" fill="#3d5a8a"/></svg>
<svg class="a" style="left:378.0px;top:329.0px" width="24" height="20" viewBox="0 0 24 20"><path d="M8,0.5 A9.8,9.8 0 1 0 8,20 Z" fill="#34548a"/><circle cx="14" cy="10.5" r="9.5" fill="url(#gb)" stroke="#fff" stroke-width="0.8"/><path d="M14,4 V11 L18.5,14" stroke="#fff" stroke-width="1.2" fill="none"/></svg>
<div class="t" style="left:409.00px;top:333.45px;font-size:13px;color:#151515;letter-spacing:-0.289px;-webkit-text-stroke:0.2px #151515;">Schedules</div>
<svg class="a" style="left:354.5px;top:359px" width="12" height="8"><path d="M1.5,1.5 L6,6 L10.5,1.5" fill="none" stroke="#3c3c3c" stroke-width="1.4"/></svg>
<svg class="a" style="left:378.0px;top:353.0px" width="24" height="20" viewBox="0 0 24 20"><path d="M12,1.5 L14,0.5 L23,0.5 L24,2 V16 L22,17 H14 L12,16 Z" fill="#3d5c90"/><path d="M0,1 L2,0 L12,0 L13,1.5 V20 H2 L0,18.5 Z" fill="#2e4c7c"/><rect x="2" y="1.5" width="11" height="18.5" fill="url(#gb)"/><rect x="4.5" y="4" width="6.5" height="1.2" fill="#fff"/><rect x="4.5" y="6.5" width="6.5" height="1.2" fill="#fff"/><rect x="16" y="3.5" width="6" height="1" fill="#fff"/><rect x="16" y="5.5" width="6" height="1" fill="#fff"/><circle cx="7.5" cy="17" r="0.7" fill="#fff"/><circle cx="19" cy="14" r="0.6" fill="#fff"/></svg>
<div class="t" style="left:409.00px;top:357.45px;font-size:13px;color:#151515;letter-spacing:-0.018px;-webkit-text-stroke:0.2px #151515;">Servers &amp; Workstations</div>
<svg class="a" style="left:382.5px;top:383px" width="12" height="8"><path d="M1.5,1.5 L6,6 L10.5,1.5" fill="none" stroke="#3c3c3c" stroke-width="1.4"/></svg>
<svg class="a" style="left:405.0px;top:377.0px" width="21" height="20" viewBox="0 0 21 20"><path d="M5,2 L7,1 L19,1 L20.5,2.5 V20 H7 L5,18.5 Z" fill="#2e4c7c"/><rect x="7" y="2.5" width="13.5" height="17.5" fill="url(#gb)"/><rect x="10" y="5.5" width="8" height="1.2" fill="#fff"/><rect x="10" y="8" width="8" height="1.2" fill="#fff"/><circle cx="14" cy="17" r="0.8" fill="#fff"/><path d="M3.5,0 L4.6,2.3 L7,2.6 L5.2,4.2 L5.7,6.6 L3.5,5.4 L1.3,6.6 L1.8,4.2 L0,2.6 L2.4,2.3 Z" fill="#f2e21a" stroke="#6a6a20" stroke-width="0.4"/></svg>
<div class="t" style="left:437.00px;top:381.45px;font-size:13px;color:#151515;transform:scaleX(0.9399);transform-origin:0 0;-webkit-text-stroke:0.2px #151515;">Computer Z420-LPRSYS [Z420-LPRSYS]</div>
<svg class="a" style="left:410.5px;top:407px" width="12" height="8"><path d="M1.5,1.5 L6,6 L10.5,1.5" fill="none" stroke="#3c3c3c" stroke-width="1.4"/></svg>
<svg class="a" style="left:434.0px;top:403.5px" width="15" height="15" viewBox="0 0 15 15"><rect x="0.5" y="0.5" width="14" height="14" rx="2" fill="#5a5f6e" stroke="#2a2e38"/><rect x="2.5" y="2.5" width="10" height="10" fill="#6c7282"/><path d="M4.5,4 V11 M4.5,4 H10 M4.5,7.5 H10 M4.5,11 H10 M7,5.5 H10 M7,9 H10" stroke="#fff" stroke-width="0.9" fill="none"/></svg>
<div class="t" style="left:455.00px;top:405.45px;font-size:13px;color:#151515;letter-spacing:-0.014px;-webkit-text-stroke:0.2px #151515;">LPR: group of modules 1 [1]</div>
<svg class="a" style="left:462.0px;top:427.5px" width="15" height="15" viewBox="0 0 15 15"><rect x="0" y="0" width="15" height="15" fill="url(#geye)"/><path d="M1,7 C4,2 11,2 14,7 C11,11 4,11 1,7 Z" fill="#fff"/><circle cx="7.5" cy="6.8" r="2.6" fill="#3a3e48"/><circle cx="7.5" cy="6.8" r="1" fill="#fff"/><path d="M1.5,7 C4,3.5 11,3.5 13.5,7" stroke="#3a3e48" stroke-width="1" fill="none"/></svg>
<div class="t" style="left:483.00px;top:429.45px;font-size:13px;color:#151515;letter-spacing:-0.015px;-webkit-text-stroke:0.2px #151515;">License plate recognizer 2 [2]</div>
<svg class="a" style="left:462.0px;top:450.5px" width="17" height="17" viewBox="0 0 17 17"><rect x="0" y="0" width="15" height="15" fill="url(#geye)"/><path d="M1,7 C4,2 11,2 14,7 C11,11 4,11 1,7 Z" fill="#fff"/><circle cx="7.5" cy="6.8" r="2.6" fill="#3a3e48"/><path d="M4.5,5.5 L14.5,15.5 M14.5,5.5 L4.5,15.5" stroke="#0a3a5a" stroke-width="3.4"/><path d="M4.5,5.5 L14.5,15.5 M14.5,5.5 L4.5,15.5" stroke="#1ec8e0" stroke-width="2"/></svg>
<div class="t" style="left:483.00px;top:453.45px;font-size:13px;color:#8a8a8a;letter-spacing:-0.007px;">License plate recognizer 12 fps 1 [1]</div>
<svg class="a" style="left:462.0px;top:475.5px" width="15" height="15" viewBox="0 0 15 15"><rect x="0.5" y="0.5" width="14" height="14" rx="1.8" fill="url(#gb)" stroke="#34548a" stroke-width="0.8"/><rect x="3.2" y="1.6" width="0.9" height="1.8" fill="#dfe8f6"/><rect x="3.2" y="11.6" width="0.9" height="1.8" fill="#dfe8f6"/><rect x="5.2" y="1.6" width="0.9" height="1.8" fill="#dfe8f6"/><rect x="5.2" y="11.6" width="0.9" height="1.8" fill="#dfe8f6"/><rect x="7.2" y="1.6" width="0.9" height="1.8" fill="#dfe8f6"/><rect x="7.2" y="11.6" width="0.9" height="1.8" fill="#dfe8f6"/><rect x="9.2" y="1.6" width="0.9" height="1.8" fill="#dfe8f6"/><rect x="9.2" y="11.6" width="0.9" height="1.8" fill="#dfe8f6"/><rect x="11.2" y="1.6" width="0.9" height="1.8" fill="#dfe8f6"/><rect x="11.2" y="11.6" width="0.9" height="1.8" fill="#dfe8f6"/><rect x="1.6" y="3.2" width="1.8" height="0.9" fill="#dfe8f6"/><rect x="11.6" y="3.2" width="1.8" height="0.9" fill="#dfe8f6"/><rect x="1.6" y="5.2" width="1.8" height="0.9" fill="#dfe8f6"/><rect x="11.6" y="5.2" width="1.8" height="0.9" fill="#dfe8f6"/><rect x="1.6" y="7.2" width="1.8" height="0.9" fill="#dfe8f6"/><rect x="11.6" y="7.2" width="1.8" height="0.9" fill="#dfe8f6"/><rect x="1.6" y="9.2" width="1.8" height="0.9" fill="#dfe8f6"/><rect x="11.6" y="9.2" width="1.8" height="0.9" fill="#dfe8f6"/><rect x="1.6" y="11.2" width="1.8" height="0.9" fill="#dfe8f6"/><rect x="11.6" y="11.2" width="1.8" height="0.9" fill="#dfe8f6"/><rect x="4" y="4" width="7" height="7" fill="#5a7cb6" stroke="#c8d6ee" stroke-width="0.6"/><rect x="6.3" y="6.3" width="2.4" height="2.4" fill="#8aa6d6"/></svg>
<div class="t" style="left:483.00px;top:477.45px;font-size:13px;color:#151515;letter-spacing:-0.041px;-webkit-text-stroke:0.2px #151515;">LPR: logic module 2 [2]</div>
<svg class="a" style="left:410.5px;top:503px" width="12" height="8"><path d="M1.5,1.5 L6,6 L10.5,1.5" fill="none" stroke="#3c3c3c" stroke-width="1.4"/></svg>
<svg class="a" style="left:433.0px;top:496.0px" width="27" height="22" viewBox="0 0 27 22"><rect x="0" y="0" width="20" height="16" rx="1.5" fill="#34548a"/><rect x="2" y="2" width="12" height="10" fill="#c8daf4"/><rect x="6" y="5" width="21" height="17" rx="1.8" fill="url(#gb)"/><rect x="11" y="7" width="14" height="9" fill="#b8ecf8"/><rect x="8" y="13" width="10" height="7" fill="#b8ecf8" stroke="#34548a" stroke-width="0.8"/></svg>
<div class="t" style="left:465.00px;top:501.45px;font-size:13px;color:#151515;transform:scaleX(0.9411);transform-origin:0 0;-webkit-text-stroke:0.2px #151515;">Desktops</div>
<svg class="a" style="left:438.5px;top:527px" width="12" height="8"><path d="M1.5,1.5 L6,6 L10.5,1.5" fill="none" stroke="#3c3c3c" stroke-width="1.4"/></svg>
<svg class="a" style="left:464.0px;top:523.0px" width="20" height="16" viewBox="0 0 20 16"><rect x="0" y="0" width="20" height="16" rx="1.8" fill="url(#gb)"/><rect x="5" y="2" width="13.5" height="9" fill="#b8ecf8"/><rect x="2" y="8" width="9" height="7" fill="#b8ecf8" stroke="#34548a" stroke-width="0.8"/></svg>
<div class="t" style="left:493.00px;top:525.45px;font-size:13px;color:#151515;letter-spacing:-0.247px;-webkit-text-stroke:0.2px #151515;">Desktop (Z420-LPRSYS) [1.1]</div>
<svg class="a" style="left:489.0px;top:546.5px" width="17" height="17" viewBox="0 0 17 17"><circle cx="8.5" cy="8.5" r="8" fill="#4a6aa0"/><circle cx="8.5" cy="8.5" r="6.6" fill="none" stroke="#dce6f6" stroke-width="1"/><circle cx="8.5" cy="8.5" r="2.3" fill="none" stroke="#dce6f6" stroke-width="1.2"/><path d="M8.5,2.5 V6.2 M3,11.5 L6.5,9.8 M14,11.5 L10.5,9.8" stroke="#dce6f6" stroke-width="1.3"/></svg>
<div class="t" style="left:511.00px;top:549.45px;font-size:13px;color:#151515;letter-spacing:-0.098px;-webkit-text-stroke:0.2px #151515;">LPR: operator GUI 1 [1]</div>
<svg class="a" style="left:492.0px;top:570.0px" width="20" height="18" viewBox="0 0 20 18"><rect x="0" y="0" width="20" height="18" rx="2" fill="url(#gb)"/><rect x="3" y="2.5" width="14" height="10" fill="#fff"/><rect x="4.5" y="4" width="5" height="3" fill="#34548a"/><rect x="10.5" y="7.5" width="5" height="3.5" fill="#34548a"/><rect x="8" y="13" width="4" height="1.5" fill="#fff"/><rect x="5" y="14.5" width="10" height="1.5" fill="#fff"/></svg>
<div class="t" style="left:521.00px;top:573.45px;font-size:13px;color:#151515;letter-spacing:0.032px;-webkit-text-stroke:0.2px #151515;">Media Client 1 [1]</div>
<svg class="a" style="left:413.7px;top:597px" width="8" height="12"><path d="M1.5,1.5 L6,6 L1.5,10.5" fill="none" stroke="#a0a0a0" stroke-width="1.4"/></svg>
<svg class="a" style="left:434.0px;top:592.5px" width="25" height="21" viewBox="0 0 25 21"><path d="M1,1.5 C1,0.5 2,0 3,0 H14 V3 L19,0.5 V8 L14,5.5 V8 H3 C2,8 1,7.5 1,6.5 Z" fill="#3f5f94"/><path d="M5,10 C5,9 6,8.5 7,8.5 H20 V11 L25,9 V17 L20,14.5 V17 H7 C6,17 5,16.5 5,15.5 Z" fill="url(#gb)"/><circle cx="3.5" cy="12" r="3.2" fill="#4a6aa0"/><path d="M4,14 L11,20.5" stroke="#4a6aa0" stroke-width="2.2"/><path d="M2,11 L6,15" stroke="#fff" stroke-width="0.7"/></svg>
<div class="t" style="left:465.00px;top:597.45px;font-size:13px;color:#151515;letter-spacing:-0.162px;-webkit-text-stroke:0.2px #151515;">Devices (Cameras &amp; Microphones)</div>
<svg class="a" style="left:412.7px;top:623px" width="8" height="8"><circle cx="4" cy="4" r="3" fill="#3d5a8a"/></svg>
<svg class="a" style="left:434.0px;top:616.5px" width="25" height="21" viewBox="0 0 25 21"><path d="M6.5,0.5 C3,0.5 2,3.5 2,7.5 V13.5 L0,16 H8.5 V18.5 H10.5 V15.5 L11,14 V8 C11,5 11.5,3 12,2 C10.5,1 9,0.5 6.5,0.5 Z" fill="url(#gb)"/><path d="M16.5,2 C12.5,2 11.5,5 11.5,9 V14.5 L9,17.5 H24.5 L22,14.5 V9 C22,5 20.5,2 16.5,2 Z" fill="url(#gb)" stroke="#fff" stroke-width="0.7"/><rect x="15.3" y="17.6" width="2.6" height="2.6" fill="#3f5f94"/><rect x="15.8" y="1" width="1.6" height="1.5" fill="#4a6aa0"/></svg>
<div class="t" style="left:465.00px;top:621.45px;font-size:13px;color:#151515;letter-spacing:-0.126px;-webkit-text-stroke:0.2px #151515;">Notifications</div>
<svg class="a" style="left:410.7px;top:647px" width="12" height="8"><path d="M1.5,1.5 L6,6 L10.5,1.5" fill="none" stroke="#3c3c3c" stroke-width="1.4"/></svg>
<svg class="a" style="left:434.0px;top:640.0px" width="26" height="22" viewBox="0 0 26 22"><path d="M-0.5,11.5 L6,4 L12.5,11.5 L8.8,11.5 C8.8,15.5 10.5,17 15,16.5 C13,19.3 10,20.5 7,20 C3.5,19.3 2.8,15.5 2.8,11.5 Z" fill="url(#gb)"/><path d="M9.5,5.8 C12,2.2 15.5,0.8 18.5,1.5 C21.5,2.3 22,5.5 22.3,10 L25.8,10 L19.2,17.5 L12.5,10 L16.2,10 C16.2,6.8 15.5,4.5 12.2,4.8 C11.2,4.9 10.2,5.3 9.5,5.8 Z" fill="url(#gb)"/></svg>
<div class="t" style="left:465.00px;top:645.45px;font-size:13px;color:#151515;letter-spacing:0.071px;-webkit-text-stroke:0.2px #151515;">Integration &amp; Automation</div>
<svg class="a" style="left:462.0px;top:664.0px" width="24" height="22" viewBox="0 0 24 22"><rect x="1" y="1.5" width="9" height="6" rx="1" fill="#3f5f94"/><path d="M10,4.5 L14,2 V7 Z" fill="#3f5f94"/><circle cx="17" cy="6.5" r="1.3" fill="#3f5f94"/><path d="M16.5,3 A3.5,3.5 0 0 1 20.5,7 M16.5,0.8 A5.8,5.8 0 0 1 22.8,7" stroke="#3f5f94" stroke-width="1.2" fill="none"/><text x="0" y="20.5" font-family="Liberation Sans" font-size="10.5" fill="#34548a" stroke="#34548a" stroke-width="0.3" textLength="23.5" lengthAdjust="spacingAndGlyphs">RTSP</text></svg>
<div class="t" style="left:493.00px;top:669.45px;font-size:13px;color:#151515;letter-spacing:-0.020px;-webkit-text-stroke:0.2px #151515;">RTSP Server 1 [1]</div>
<svg class="a" style="left:438.3px;top:695px" width="12" height="8"><path d="M1.5,1.5 L6,6 L10.5,1.5" fill="none" stroke="#3c3c3c" stroke-width="1.4"/></svg>
<svg class="a" style="left:464.0px;top:689.0px" width="18" height="20" viewBox="0 0 18 20"><path d="M0.5,1.5 C0.5,0.8 1,0.5 1.5,0.5 H12.5 L17.5,5.5 V18.5 C17.5,19.2 17,19.5 16.5,19.5 H1.5 C1,19.5 0.5,19.2 0.5,18.5 Z" fill="#eef2fa" stroke="#4a6aa0" stroke-width="1.1"/><path d="M12.5,0.5 V5.5 H17.5" fill="#8aa6d6" stroke="#4a6aa0" stroke-width="1"/><path d="M6.5,9.5 L4,12.2 L6.5,14.8 M11.5,9.5 L14,12.2 L11.5,14.8 M10,8.5 L8,16" stroke="#2d4a7b" stroke-width="1.1" fill="none"/></svg>
<div class="t" style="left:493.00px;top:693.45px;font-size:13px;color:#151515;letter-spacing:0.024px;-webkit-text-stroke:0.2px #151515;">VB/JScript programs 1 [1]</div>
<svg class="a" style="left:492.5px;top:713.0px" width="18" height="20" viewBox="0 0 18 20"><path d="M0.5,1.5 C0.5,0.8 1,0.5 1.5,0.5 H12.5 L17.5,5.5 V18.5 C17.5,19.2 17,19.5 16.5,19.5 H1.5 C1,19.5 0.5,19.2 0.5,18.5 Z" fill="#eef2fa" stroke="#4a6aa0" stroke-width="1.1"/><path d="M12.5,0.5 V5.5 H17.5" fill="#8aa6d6" stroke="#4a6aa0" stroke-width="1"/><path d="M6.5,9.5 L4,12.2 L6.5,14.8 M11.5,9.5 L14,12.2 L11.5,14.8 M10,8.5 L8,16" stroke="#2d4a7b" stroke-width="1.1" fill="none"/></svg>
<div class="t" style="left:521.00px;top:717.45px;font-size:13px;color:#151515;letter-spacing:-0.259px;-webkit-text-stroke:0.2px #151515;">LPR Event for BVMS [2]</div>
<svg class="a" style="left:412.7px;top:743px" width="8" height="8"><circle cx="4" cy="4" r="3" fill="#3d5a8a"/></svg>
<svg class="a" style="left:436.0px;top:736.0px" width="22" height="22" viewBox="0 0 22 22"><rect x="0.5" y="0.5" width="12" height="21" rx="1.6" fill="#3f5f94"/><rect x="2" y="3" width="9" height="15" fill="#c8d6ee"/><circle cx="14" cy="11" r="7.2" fill="#4a6aa0" stroke="#fff" stroke-width="0.9"/><path d="M7,11 H21 M14,4 V18 M8.5,7.5 H19.5 M8.5,14.5 H19.5" stroke="#fff" stroke-width="0.8"/><ellipse cx="14" cy="11" rx="3" ry="7" fill="none" stroke="#fff" stroke-width="0.8"/></svg>
<div class="t" style="left:465.00px;top:741.45px;font-size:13px;color:#151515;letter-spacing:-0.042px;-webkit-text-stroke:0.2px #151515;">Mobile &amp; Web Servers</div>
<div class="a" style="left:710px;top:305px;width:514px;height:580px;background:#f0f0f0;border:1px solid #707070;box-shadow:0 2px 14px rgba(0,0,0,.35)"></div>
<div class="a" style="left:711px;top:306px;width:512px;height:30px;background:#fff"></div>
<svg class="a" style="left:720px;top:313px" width="15" height="15" viewBox="0 0 15 15"><circle cx="7.5" cy="7.5" r="6.6" fill="none" stroke="#2d5d9a" stroke-width="1.1"/><path d="M10.5,5 H6 C4.3,5 4.3,7.5 6,7.5 H9 C10.8,7.5 10.8,10 9,10 H4.5" fill="none" stroke="#2d5d9a" stroke-width="1.2"/></svg>
<div class="t" style="left:740.00px;top:315.38px;font-size:12.5px;color:#000;letter-spacing:-0.226px;-webkit-text-stroke:0.2px #000;">Watchlist properties</div>
<div class="t" style="left:1152.52px;top:315.38px;font-size:12.5px;color:#000;-webkit-text-stroke:0.2px #000;">?</div>
<svg class="a" style="left:1195px;top:315px" width="11" height="11" viewBox="0 0 11 11"><path d="M0.5,0.5 L10.5,10.5 M10.5,0.5 L0.5,10.5" stroke="#000" stroke-width="1.1"/></svg>
<div class="t" style="left:721.50px;top:349.23px;font-size:11.5px;color:#000;transform:scaleX(0.9152);transform-origin:0 0;-webkit-text-stroke:0.2px #000;">Name:</div>
<div class="t" style="left:971.00px;top:349.23px;font-size:11.5px;color:#000;letter-spacing:-0.282px;-webkit-text-stroke:0.2px #000;">Type:</div>
<div class="a" style="left:722px;top:366px;width:243px;height:20px;background:#f0f0f0;border:1px solid #cfcfcf"></div>
<div class="t" style="left:724.50px;top:372.23px;font-size:11.5px;color:#6d6d6d;transform:scaleX(0.9010);transform-origin:0 0;">Blacklist</div>
<div class="a" style="left:971px;top:366px;width:242px;height:20px;background:#e1e1e1;border:1px solid #adadad"></div>
<div class="t" style="left:973.50px;top:372.23px;font-size:11.5px;color:#000;transform:scaleX(0.9247);transform-origin:0 0;-webkit-text-stroke:0.2px #000;">Blacklist</div>
<svg class="a" style="left:1198px;top:372px" width="10" height="6"><path d="M0.5,0.5 H9.5 L5,5.5 Z" fill="#000"/></svg>
<div class="a" style="left:722px;top:421px;width:490px;height:376px;background:#fff;border:1px solid #d9d9d9"></div>
<div class="a" style="left:801px;top:403px;width:52px;height:19px;background:#f0f0f0;border:1px solid #d9d9d9;border-bottom:none"></div>
<div class="a" style="left:853px;top:403px;width:88px;height:19px;background:#f0f0f0;border:1px solid #d9d9d9;border-bottom:none;border-left:none"></div>
<div class="a" style="left:722px;top:401px;width:79px;height:22px;background:#fff;border:1px solid #d9d9d9;border-bottom:none"></div>
<div class="t" style="left:733.50px;top:407.73px;font-size:11.5px;color:#000;transform:scaleX(0.9281);transform-origin:0 0;-webkit-text-stroke:0.2px #000;">Connection</div>
<div class="t" style="left:811.50px;top:409.23px;font-size:11.5px;color:#000;letter-spacing:-0.329px;-webkit-text-stroke:0.2px #000;">Query</div>
<div class="t" style="left:865.50px;top:409.23px;font-size:11.5px;color:#000;transform:scaleX(0.9057);transform-origin:0 0;-webkit-text-stroke:0.2px #000;">Miscellaneous</div>
<div class="t" style="left:734.50px;top:436.23px;font-size:11.5px;color:#000;transform:scaleX(0.9386);transform-origin:0 0;-webkit-text-stroke:0.2px #000;">Connection string:</div>
<div class="a" style="left:735px;top:453px;width:463px;height:192px;background:#fff;border:1px solid #0078d7"></div>
<div class="a" style="left:800px;top:458.5px;width:23px;height:13px;background:#0078d7"></div>
<div class="t" style="left:739.50px;top:460.65px;font-size:11px;color:#000;letter-spacing:-0.372px;-webkit-text-stroke:0.2px #000;">DATABASE=</div>
<div class="t" style="left:800.50px;top:460.65px;font-size:11px;color:#fff;letter-spacing:-0.137px;">auto</div>
<div class="t" style="left:822.00px;top:460.65px;font-size:11px;color:#000;letter-spacing:-0.313px;-webkit-text-stroke:0.2px #000;">;DRIVER={PostgreSQL</div>
<div class="a" style="left:823px;top:459px;width:1px;height:13px;background:#000"></div>
<div class="t" style="left:739.50px;top:473.65px;font-size:11px;color:#000;letter-spacing:-0.041px;-webkit-text-stroke:0.2px #000;">Unicode};PORT=5432;PWD=auto;SERVER=127.0.0.1;UID=auto;</div>
<div class="a" style="left:736px;top:652px;width:461px;height:21px;background:#e1e1e1;border:1px solid #adadad"></div><div class="t" style="left:907.00px;top:658.02px;font-size:11.5px;color:#000;transform:scaleX(0.9498);transform-origin:0 0;-webkit-text-stroke:0.2px #000;">Build connection string...</div>
<div class="a" style="left:723px;top:814px;width:489px;height:21px;background:#cccccc;border:1px solid #bfbfbf"></div><div class="t" style="left:957.00px;top:820.02px;font-size:11.5px;color:#838383;letter-spacing:-0.030px;">Test</div>
<div class="a" style="left:1058px;top:852px;width:73px;height:21px;background:#cccccc;border:1px solid #bfbfbf"></div><div class="t" style="left:1087.50px;top:858.02px;font-size:11.5px;color:#838383;transform:scaleX(0.8426);transform-origin:0 0;">OK</div>
<div class="a" style="left:1139px;top:852px;width:73px;height:21px;background:#e1e1e1;border:1px solid #adadad"></div><div class="t" style="left:1158.50px;top:858.02px;font-size:11.5px;color:#000;transform:scaleX(0.9498);transform-origin:0 0;-webkit-text-stroke:0.2px #000;">Cancel</div>
<div class="a" style="left:1440px;top:44px;width:473px;height:465px;background:#f0f0f0;box-shadow:0 1px 6px rgba(0,0,0,.55)"></div>
<div class="a" style="left:1440px;top:44px;width:473px;height:6px;background:#fff"></div>
<div class="a" style="left:1462px;top:92px;width:427px;height:364px;background:#fff;border:1px solid #d9d9d9"></div>
<div class="a" style="left:1464px;top:74px;width:79px;height:19px;background:#f0f0f0;border:1px solid #d9d9d9;border-bottom:none"></div>
<div class="a" style="left:1543px;top:72px;width:74px;height:21px;background:#fff;border:1px solid #d9d9d9;border-bottom:none"></div>
<div class="t" style="left:1473.50px;top:79.72px;font-size:11.5px;color:#000;transform:scaleX(0.9074);transform-origin:0 0;-webkit-text-stroke:0.2px #000;">Recognizers</div>
<div class="t" style="left:1555.00px;top:78.22px;font-size:11.5px;color:#000;letter-spacing:-0.219px;-webkit-text-stroke:0.2px #000;">Watchlists</div>
<div class="t" style="left:1474.00px;top:107.22px;font-size:11.5px;color:#000;transform:scaleX(0.9326);transform-origin:0 0;-webkit-text-stroke:0.2px #000;">Search for recognized license plate numbers in Watchlists:</div>
<div class="a" style="left:1475px;top:124px;width:401px;height:227px;background:#fff;border:1px solid #828790"></div>
<div class="a" style="left:1479px;top:128px;width:393px;height:20px;background:#d9d9d9"></div>
<svg class="a" style="left:1483px;top:130px" width="16" height="18" viewBox="0 0 16 18"><rect x="1" y="1" width="12" height="11" fill="#a4cbea"/><rect x="1" y="1" width="12" height="1.8" fill="#1a78d8"/><rect x="1" y="10" width="12" height="2" fill="#3a80c8"/><circle cx="8" cy="8" r="3.3" fill="#8fd0f2" stroke="#5a9ad0" stroke-width="0.8"/><path d="M5.5,10.8 L2.2,15.5" stroke="#5a6fa0" stroke-width="2"/><path d="M5.2,10.5 L2,15" stroke="#d0b060" stroke-width="0.7"/></svg>
<div class="t" style="left:1504.00px;top:133.38px;font-size:12.5px;color:#000;transform:scaleX(0.9379);transform-origin:0 0;-webkit-text-stroke:0.2px #000;">Blacklist</div>
<div class="a" style="left:1476px;top:358px;width:61px;height:21px;background:#e1e1e1;border:1px solid #adadad"></div><div class="t" style="left:1493.00px;top:364.03px;font-size:11.5px;color:#000;transform:scaleX(0.8986);transform-origin:0 0;-webkit-text-stroke:0.2px #000;">Add...</div>
<div class="a" style="left:1545px;top:358px;width:69px;height:21px;background:#e1e1e1;border:1px solid #adadad"></div><div class="t" style="left:1560.00px;top:364.03px;font-size:11.5px;color:#000;letter-spacing:-0.090px;-webkit-text-stroke:0.2px #000;">Clone...</div>
<div class="a" style="left:1622px;top:358px;width:78px;height:21px;background:#e1e1e1;border:1px solid #adadad"></div><div class="t" style="left:1636.00px;top:364.03px;font-size:11.5px;color:#000;letter-spacing:-0.268px;-webkit-text-stroke:0.2px #000;">Properties</div>
<div class="a" style="left:1709px;top:358px;width:69px;height:21px;background:#e1e1e1;border:1px solid #adadad"></div><div class="t" style="left:1723.50px;top:364.03px;font-size:11.5px;color:#000;transform:scaleX(0.9341);transform-origin:0 0;-webkit-text-stroke:0.2px #000;">Remove</div>
<div class="t" style="left:1474.00px;top:403.23px;font-size:11.5px;color:#000;letter-spacing:-0.268px;-webkit-text-stroke:0.2px #000;">Watchlists changes history</div>
<div class="a" style="left:1609px;top:406px;width:267px;height:1px;background:#a0a0a0"></div>
<div class="t" style="left:1474.00px;top:427.23px;font-size:11.5px;color:#000;letter-spacing:-0.257px;-webkit-text-stroke:0.2px #000;">Log and view the Watchlists changes history:</div>
<div class="a" style="left:1699px;top:421px;width:176px;height:21px;background:#e1e1e1;border:1px solid #adadad"></div><div class="t" style="left:1759.00px;top:427.03px;font-size:11.5px;color:#000;transform:scaleX(0.9420);transform-origin:0 0;-webkit-text-stroke:0.2px #000;">Configure...</div>
<div class="a" style="left:1747px;top:476px;width:72px;height:21px;background:#e1e1e1;border:1px solid #adadad"></div><div class="t" style="left:1775.50px;top:482.03px;font-size:11.5px;color:#000;transform:scaleX(0.9028);transform-origin:0 0;-webkit-text-stroke:0.2px #000;">OK</div>
<div class="a" style="left:1828px;top:476px;width:73px;height:21px;background:#e1e1e1;border:1px solid #adadad"></div><div class="t" style="left:1847.50px;top:482.03px;font-size:11.5px;color:#000;transform:scaleX(0.9498);transform-origin:0 0;-webkit-text-stroke:0.2px #000;">Cancel</div>
<div class="a" style="left:0px;top:1160px;width:1920px;height:40px;background:#0b0d12"></div>
<svg class="a" style="left:16px;top:1172px" width="17" height="17" viewBox="0 0 17 17" fill="#fff"><path d="M0,2.4 L7,1.4 V8 H0 Z M8,1.2 L17,0 V8 H8 Z M0,9 H7 V15.6 L0,14.6 Z M8,9 H17 V17 L8,15.8 Z"/></svg>
<svg class="a" style="left:63px;top:1171px" width="18" height="18" viewBox="0 0 18 18" fill="none" stroke="#fff" stroke-width="1.3"><circle cx="10.5" cy="7" r="5.6"/><path d="M6.5,11 L1,16.8"/></svg>
<svg class="a" style="left:111px;top:1171px" width="18" height="17" viewBox="0 0 18 17" fill="none" stroke="#fff" stroke-width="1.3"><path d="M1,1.5 H13 M1,15.5 H13"/><rect x="2.5" y="4.5" width="9" height="8"/><path d="M15.5,0.5 V3 M15.5,5 V12 M15.5,14 V16.5"/></svg>
<svg class="a" style="left:160px;top:1169px" width="22" height="22" viewBox="0 0 22 22"><path d="M11,1 C4.5,1 0.5,6 0.5,11 C0.5,17 5.5,21.5 11.5,21.5 C14.5,21.5 17,20.5 19,19 V15 C17,16.5 14.5,17.5 12,17.5 C8.5,17.5 6.5,15.5 6.3,13 H20.5 C21.5,6 17.5,1 11,1 Z M6.5,9.5 C7,7 9,5.5 11.5,5.5 C14,5.5 15.5,7 15.5,9.5 Z" fill="#1a7ee0"/></svg>
<svg class="a" style="left:208px;top:1167px" width="24" height="25" viewBox="0 0 24 25"><defs><radialGradient id="ieg" cx=".4" cy=".35" r=".7"><stop offset="0" stop-color="#9be6ff"/><stop offset=".6" stop-color="#34b4ec"/><stop offset="1" stop-color="#1a78c8"/></radialGradient></defs><circle cx="12.5" cy="13.5" r="8.8" fill="url(#ieg)"/><path d="M7.2,12 C7.8,8 17.2,8 17.8,12 Z" fill="#0b0d12"/><path d="M8,15.2 H22 V19.5 C19,21.5 15,21.5 13,20.5 C11,19.5 9.5,17.5 8,15.2 Z" fill="#0b0d12"/><path d="M9,15.2 C10.5,18.5 12.5,19.5 15,19.5 C17,19.5 19,18.8 20.5,17.8" fill="none" stroke="#48c0f0" stroke-width="2.2"/><path d="M3.5,23 C-1.5,19 6,7 16,3 C21.5,0.8 24.5,1.5 23,5.5" fill="none" stroke="#f2c418" stroke-width="1.8"/></svg>
<svg class="a" style="left:257px;top:1170px" width="23" height="20" viewBox="0 0 23 20"><path d="M0.5,2 H8 L10,4 H22.5 V19.5 H0.5 Z" fill="#f8d878"/><path d="M0.5,6 H22.5 V19.5 H0.5 Z" fill="#fbe2a0"/><path d="M6,19.5 V13 H17 V19.5 H14 V16 H9 V19.5 Z" fill="#2a9ae8"/></svg>
<svg class="a" style="left:308px;top:1168px" width="19" height="24" viewBox="0 0 19 24"><path d="M1,2 L8,0.5 L13,2.5 L18,1 V20 L14,22.5 L9,21 L1,23 Z" fill="#d8d8d8" stroke="#7a7a7a" stroke-width="0.8"/><path d="M3,6 H16 M3,9 H16 M3,12 H16 M3,15 H16 M3,18 H16 M7,4 V21 M12,4 V21" stroke="#888" stroke-width="0.6"/><path d="M9,11 V17 M6.5,14.5 L9,17.5 L11.5,14.5" stroke="#e83020" stroke-width="1.8" fill="none"/><path d="M7,19 H11" stroke="#f0d020" stroke-width="1.5"/></svg>
<div class="a" style="left:355px;top:1168px;width:24px;height:24px;background:#5a626c;border-radius:2px"></div>
<svg class="a" style="left:357px;top:1170px" width="20" height="20" viewBox="0 0 20 20"><path d="M3,3.5 C5,1 9,1.5 9.5,5 L18,14 C19,15.5 17,17.5 15.5,16.5 L7,8 C3.5,8.5 1.5,5.5 2.5,3 L5,5.5 L7,5 L7,3.5 L4.5,1 Z" fill="none" stroke="#fff" stroke-width="1.1"/></svg>
<div class="a" style="left:404px;top:1168px;width:24px;height:24px;background:#5a626c;border-radius:2px"></div>
<svg class="a" style="left:406px;top:1171px" width="20" height="18" viewBox="0 0 20 18" fill="none" stroke="#fff" stroke-width="1"><rect x="1" y="1" width="18" height="12"/><path d="M10,13 V16 M6,16.5 H14"/><rect x="5" y="5" width="7" height="4.5"/><rect x="12" y="6" width="3" height="2.5" fill="#fff"/></svg>
<svg class="a" style="left:452px;top:1168px" width="24" height="24" viewBox="0 0 24 24"><path d="M6,1 L22,4 L19,23 L1,20 Z" fill="#c8e4ec"/><path d="M6,1 L22,4 L21,8 L5,5 Z" fill="#e8f4f8"/><path d="M2,18 L19,21 L20,14 Z" fill="#6ab0c8" opacity=".7"/><path d="M22,4 L19,23 L21,23 L23.5,5 Z" fill="#d0a040"/></svg>
<svg class="a" style="left:502px;top:1168px" width="24" height="24" viewBox="0 0 24 24"><circle cx="12" cy="12" r="11.5" fill="#fff"/><circle cx="12" cy="12" r="9.5" fill="none" stroke="#1a5aa0" stroke-width="1.4"/><path d="M16.5,8 H9 C6.5,8 6.5,12 9,12 H15 C17.5,12 17.5,16 15,16 H7.5" fill="none" stroke="#1a5aa0" stroke-width="1.5"/></svg>
<div class="a" style="left:551px;top:1168px;width:24px;height:24px;background:#3c4a86;border-radius:4px"></div>
<svg class="a" style="left:553px;top:1171px" width="20" height="18" viewBox="0 0 20 18"><rect x="2" y="1" width="16" height="11" fill="#fff"/><rect x="3.5" y="2.5" width="6" height="3.5" fill="#3c4a86"/><rect x="10.5" y="6.5" width="6" height="4" fill="#3c4a86"/><rect x="8" y="12.5" width="4" height="2" fill="#fff"/><rect x="5" y="14.5" width="10" height="2" fill="#fff"/></svg>
<svg class="a" style="left:600px;top:1168px" width="24" height="24" viewBox="0 0 24 24"><circle cx="12" cy="12" r="11.5" fill="#3c4a86"/><circle cx="12" cy="12" r="9" fill="none" stroke="#dfe6f6" stroke-width="1.6"/><circle cx="12" cy="12" r="3" fill="none" stroke="#dfe6f6" stroke-width="1.6"/><path d="M12,3 V9 M4,16.5 L9.3,13.5 M20,16.5 L14.7,13.5" stroke="#dfe6f6" stroke-width="1.8"/></svg>
<svg class="a" style="left:651px;top:1168px" width="20" height="24" viewBox="0 0 20 24"><path d="M1,8 H9 L11,10 V21 H1 Z" fill="#f4f4f4"/><path d="M3,12 H9 M3,14.5 H9 M3,17 H9" stroke="#888" stroke-width="0.8"/><path d="M10,4 C10,1 17,1 17,4.5 C17,7 13.5,7 13.5,10" fill="none" stroke="#f8f020" stroke-width="2.4"/><circle cx="13.5" cy="13" r="1.4" fill="#f8f020"/></svg>
<div class="a" style="left:151px;top:1198px;width:40px;height:2px;background:#76b9ed"></div>
<div class="a" style="left:249px;top:1198px;width:40px;height:2px;background:#76b9ed"></div>
<div class="a" style="left:347px;top:1198px;width:40px;height:2px;background:#76b9ed"></div>
<div class="a" style="left:396px;top:1198px;width:40px;height:2px;background:#76b9ed"></div>
<div class="a" style="left:445px;top:1198px;width:40px;height:2px;background:#76b9ed"></div>
<div class="a" style="left:494px;top:1198px;width:40px;height:2px;background:#76b9ed"></div>
<div class="a" style="left:543px;top:1198px;width:40px;height:2px;background:#76b9ed"></div>
<div class="a" style="left:592px;top:1198px;width:40px;height:2px;background:#76b9ed"></div>
<div class="a" style="left:641px;top:1198px;width:40px;height:2px;background:#76b9ed"></div>
<svg class="a" style="left:1657px;top:1171px" width="17" height="17" viewBox="0 0 17 17" fill="none" stroke="#fff" stroke-width="1"><circle cx="11.5" cy="4" r="2.6"/><path d="M7.5,11 C8,7.5 15,7.5 16,11"/><circle cx="5" cy="9" r="2.6"/><path d="M0.8,16 C1.5,12.5 8.5,12.5 9.2,16"/></svg>
<svg class="a" style="left:1694px;top:1174px" width="14" height="9" viewBox="0 0 14 9" fill="none" stroke="#fff" stroke-width="1.1"><path d="M1,7.5 L7,1.5 L13,7.5"/></svg>
<svg class="a" style="left:1716px;top:1173px" width="18" height="16" viewBox="0 0 18 16" fill="none" stroke="#fff" stroke-width="1"><rect x="3" y="1" width="14" height="10"/><path d="M10,11 V14 M6,14.5 H14 M1,0.5 V15"/><rect x="0.5" y="1" width="5" height="4" fill="#0b0d12"/><path d="M1.5,2.5 L3,4 L5,1.5"/></svg>
<svg class="a" style="left:1740px;top:1173px" width="16" height="15" viewBox="0 0 16 15" fill="none" stroke="#fff" stroke-width="1"><path d="M1,5 H4 L8,1.5 V13.5 L4,10 H1 Z"/><path d="M10.5,5.5 L14.5,9.5 M14.5,5.5 L10.5,9.5"/></svg>
<div class="t" style="left:1767.00px;top:1173.80px;font-size:12px;color:#fff;transform:scaleX(0.8845);transform-origin:0 0;">ENG</div>
<div class="t" style="left:1818.00px;top:1164.80px;font-size:12px;color:#fff;transform:scaleX(0.8991);transform-origin:0 0;">07:56</div>
<div class="t" style="left:1803.00px;top:1182.38px;font-size:12.5px;color:#fff;transform:scaleX(0.9271);transform-origin:0 0;">01/08/2019</div>
<svg class="a" style="left:1877px;top:1171px" width="28" height="26" viewBox="0 0 28 26"><path d="M0.5,0.5 H17 V12 H6 L3,15 V12 H0.5 Z" fill="#fff"/><path d="M3,3.5 H14 M3,6 H14 M3,8.5 H10" stroke="#0b0d12" stroke-width="1"/><circle cx="17.5" cy="16" r="7.6" fill="#3a3a3e" stroke="#5a5a60" stroke-width="1"/><text x="14" y="20.2" font-family="Liberation Sans" font-weight="bold" font-size="11" fill="#fff">2</text></svg>
<div class="a" style="left:1915px;top:1160px;width:1px;height:40px;background:#5a5c62"></div>
</body></html>
